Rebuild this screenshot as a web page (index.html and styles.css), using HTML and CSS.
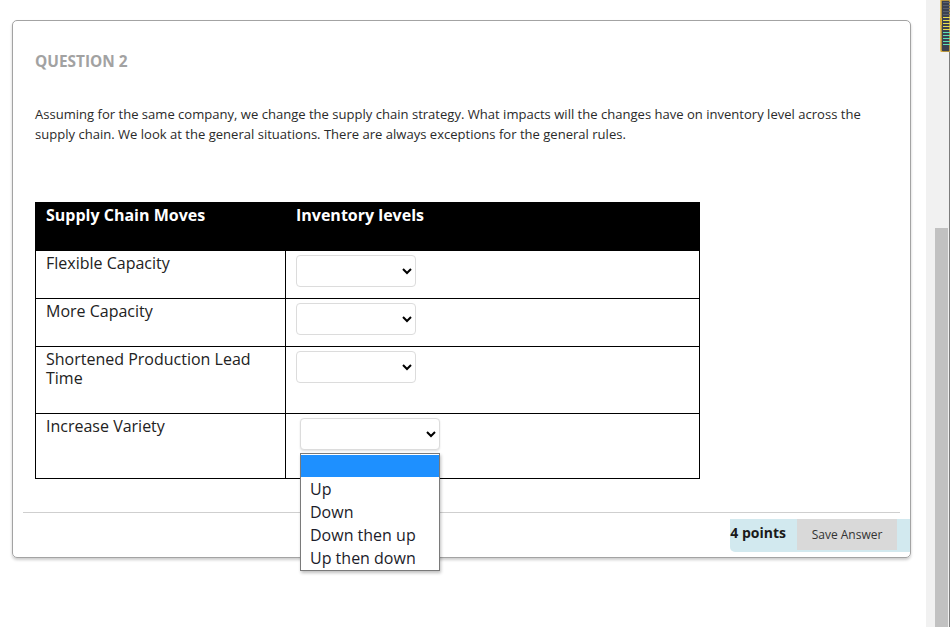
FILE: index.html
```html
<!DOCTYPE html>
<html lang="en">
<head>
  <meta charset="UTF-8">
  <meta name="viewport" content="width=device-width, initial-scale=1.0">
  <title>Question 2</title>
  <link rel="stylesheet" href="styles.css">
</head>
<body>
  <div class="page">
    <div class="card">
      <div class="card-body">
        <h3 class="q-title">QUESTION 2</h3>
        <p class="q-text">Assuming for the same company, we change the supply chain strategy. What impacts will the changes have on inventory level across the supply chain. We look at the general situations. There are always exceptions for the general rules.</p>

        <table class="moves">
          <tr class="head">
            <th class="col-move">Supply Chain Moves</th>
            <th>Inventory levels</th>
          </tr>
          <tr>
            <td>Flexible Capacity</td>
            <td><select><option></option><option>Up</option><option>Down</option><option>Down then up</option><option>Up then down</option></select></td>
          </tr>
          <tr>
            <td>More Capacity</td>
            <td><select><option></option><option>Up</option><option>Down</option><option>Down then up</option><option>Up then down</option></select></td>
          </tr>
          <tr class="row-tall">
            <td>Shortened Production Lead Time</td>
            <td><select><option></option><option>Up</option><option>Down</option><option>Down then up</option><option>Up then down</option></select></td>
          </tr>
          <tr class="row-last">
            <td>Increase Variety</td>
            <td class="open-cell">
              <select class="open"><option></option><option>Up</option><option>Down</option><option>Down then up</option><option>Up then down</option></select>
              <!-- open dropdown list -->
              <ul class="dropdown">
                <li class="picked">&nbsp;</li>
                <li>Up</li>
                <li>Down</li>
                <li>Down then up</li>
                <li>Up then down</li>
              </ul>
            </td>
          </tr>
        </table>
      </div>

      <div class="divider"></div>

      <div class="card-foot">
        <div class="points-box">
          <span class="points">4 points</span>
          <button class="save">Save Answer</button>
        </div>
      </div>
    </div>
  </div>

  <div class="scrollbar">
    <svg class="meter" width="10" height="52" viewBox="0 0 10 52">
      <path d="M10 0 V52 H3 Q1 52 1 50 V0 Z" fill="#3b4150" stroke="#d9ad3c" stroke-width="1.5"/>
      <rect x="0" y="18" width="2" height="7" fill="#d9ad3c"/>
      <g fill="#59606e">
        <rect x="3" y="2" width="7" height="1"/><rect x="3" y="5" width="7" height="1"/>
        <rect x="3" y="8" width="7" height="1"/><rect x="3" y="11" width="7" height="1"/>
        <rect x="3" y="14" width="7" height="1"/>
      </g>
      <g fill="#e6dc4e">
        <rect x="3" y="17" width="7" height="1"/><rect x="3" y="20" width="7" height="1"/>
        <rect x="3" y="23" width="7" height="1"/><rect x="3" y="26" width="7" height="1"/>
        <rect x="3" y="29" width="7" height="1"/>
      </g>
      <g fill="#5fe0b2">
        <rect x="3" y="32" width="7" height="1"/><rect x="3" y="35" width="7" height="1"/>
        <rect x="3" y="38" width="7" height="1"/><rect x="3" y="41" width="7" height="1"/>
        <rect x="3" y="44" width="7" height="1"/>
      </g>
    </svg>
    <div class="thumb"></div>
  </div>
</body>
</html>
```

FILE: styles.css
```css
*, *:before, *:after{
  padding: 0;
  margin: 0;
  box-sizing: border-box;
}
body{
  height: 627px;
  overflow: hidden;
  background: #ffffff;
  font-family: "Open Sans", Arial, sans-serif;
  color: #222;
  display: flex;
}
.page{
  flex: 1;
  padding: 20px 0 0 12px;
}
.card{
  width: 899px;
  border: 1px solid #a3a3a3;
  border-radius: 5px;
  box-shadow: 0 2px 3px rgba(0,0,0,0.2);
  padding-bottom: 5px;
}
.card-body{
  padding: 31px 22px 0;
}
.q-title{
  font-size: 15.4px;
  line-height: 20px;
  font-weight: bold;
  color: #a2a2a2;
}
.q-text{
  margin-top: 32px;
  font-size: 13.05px;
  line-height: 20px;
  color: #2a2a2a;
}
/* answer table */
.moves{
  margin-top: 58px;
  width: 665px;
  border-collapse: collapse;
}
.moves th, .moves td{
  border: 1px solid #000;
  padding: 3px 10px 8px;
  text-align: left;
  vertical-align: top;
  font-size: 16px;
  line-height: 19.2px;
}
.moves th{
  background: #000;
  color: #fff;
  font-weight: bold;
  height: 48px;
}
.moves .col-move{
  width: 250px;
}
.moves td{
  height: 48px;
  color: #222;
}
.moves .row-tall td{
  height: 67px;
}
.moves .row-last td{
  height: 65px;
}
.moves select{
  display: block;
  margin-top: 1px;
  width: 120px;
  height: 32px;
  border: 1px solid #dcdcdc;
  border-radius: 4px;
  background: #fff;
  font-family: "Open Sans", Arial, sans-serif;
  font-size: 16px;
}
.moves select.open{
  margin-left: 4px;
  width: 140px;
  box-shadow: 0 1px 2px rgba(0,0,0,0.12);
}
.open-cell{
  position: relative;
}
.dropdown{
  position: absolute;
  left: 14px;
  top: 39px;
  width: 140px;
  list-style: none;
  background: #fff;
  border: 1px solid #7a7a7a;
  padding-top: 1px;
  box-shadow: 1px 2px 3px rgba(0,0,0,0.25);
  z-index: 5;
}
.dropdown li{
  font-size: 16px;
  line-height: 23px;
  height: 23px;
  padding-left: 9px;
  color: #1c1c2a;
}
.dropdown li.picked{
  background: #1e90ff;
  height: 22px;
  margin-bottom: 1px;
}
/* footer */
.divider{
  margin: 33px 10px 0;
  border-top: 1px solid #cfcfcf;
}
.card-foot{
  display: flex;
  justify-content: flex-end;
  margin-top: 6px;
}
.points-box{
  display: flex;
  align-items: flex-start;
  background: #d2e9ef;
  border-bottom-left-radius: 5px;
  height: 33px;
  padding-right: 13px;
}
.points{
  font-size: 14px;
  font-weight: bold;
  line-height: 28px;
  padding-right: 11px;
  color: #1a1a1a;
}
.save{
  width: 100px;
  height: 31px;
  border: none;
  background: #d9d9d9;
  color: #333;
  font-family: "Open Sans", Arial, sans-serif;
  font-size: 12px;
}
/* window scrollbar */
.scrollbar{
  width: 24px;
  background: #f1f1f1;
  border-right: 1px solid #7d7d7d;
  position: relative;
  display: flex;
  flex-direction: column;
  align-items: flex-end;
}
.thumb{
  margin-top: 228px;
  margin-right: 1px;
  width: 13px;
  flex: 1;
  background: #c1c1c1;
}
.meter{
  position: absolute;
  top: 0;
  right: -1px;
}
```
